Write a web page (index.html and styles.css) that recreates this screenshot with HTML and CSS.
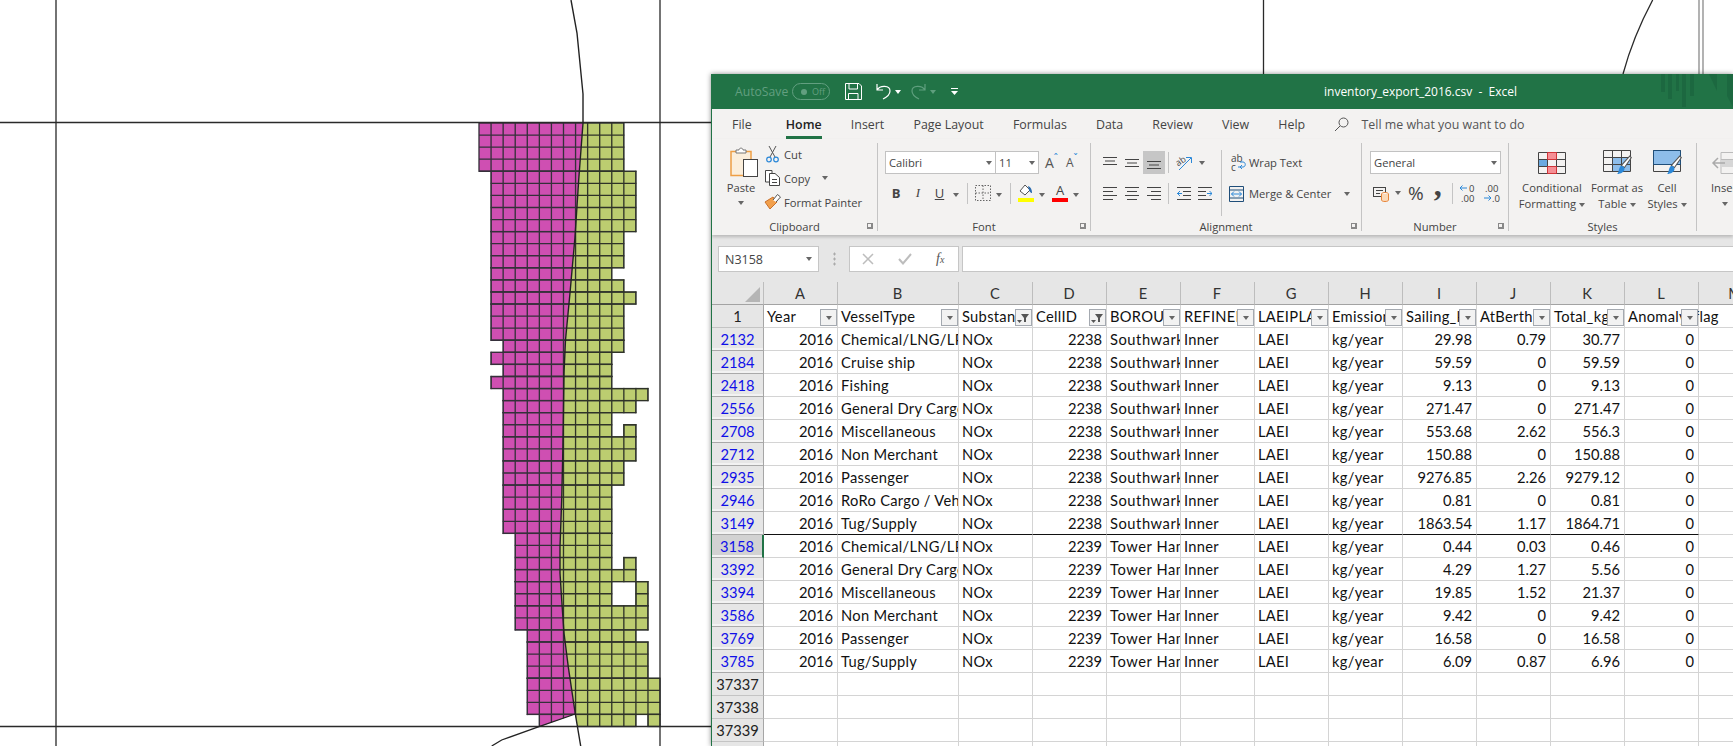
FILE: index.html
```html
<!DOCTYPE html>
<html lang="en">
<head>
  <meta charset="UTF-8" />
  <title>inventory_export_2016.csv - Excel</title>
  <link rel="stylesheet" href="styles.css">
</head>
<body>

  <!-- Icon sprite -->
  <svg class="sprite" width="0" height="0">
    <symbol id="i-top" viewBox="0 0 14 14"><path d="M0 1.5H14M2 5H12M0 8.5H14" stroke="#444" fill="none"/></symbol>
    <symbol id="i-mid" viewBox="0 0 14 14"><path d="M0 3.5H14M2 7H12M0 10.5H14" stroke="#444" fill="none"/></symbol>
    <symbol id="i-bot" viewBox="0 0 14 14"><path d="M0 5.5H14M2 9H12M0 12.5H14" stroke="#444" fill="none"/></symbol>
    <symbol id="i-left" viewBox="0 0 14 14"><path d="M0 1.5H14M0 5.5H10M0 9.5H14M0 13.5H10" stroke="#444" fill="none"/></symbol>
    <symbol id="i-center" viewBox="0 0 14 14"><path d="M0 1.5H14M2 5.5H12M0 9.5H14M2 13.5H12" stroke="#444" fill="none"/></symbol>
    <symbol id="i-right" viewBox="0 0 14 14"><path d="M0 1.5H14M4 5.5H14M0 9.5H14M4 13.5H14" stroke="#444" fill="none"/></symbol>
    <symbol id="i-brush" viewBox="0 0 14 20"><path d="M12 1l1.5 1.5L7 12l-3-2z" fill="#fff" stroke="#555"/><path d="M3.5 10.5c2-.5 3.500 1 3.500 2.500 0 3-3.500 5-7 5 2-1.500 1-5 3.500-7.500z" fill="#2b88d8"/></symbol>
    <symbol id="i-funnel" viewBox="0 0 15 15"><path d="M5 4h8L10 8v4H8V8z" fill="#555"/><path d="M1 10h5l-2.500 3z" fill="#555"/></symbol>
  </svg>

  <!-- Map behind the window -->
  <svg class="map" width="1733" height="746" viewBox="0 0 1733 746">
    <defs>
      <clipPath id="pinkSide">
        <polygon points="0,100 583,100 583,123 578.700,180 575,237 570,293 565.500,340 564,373 563.300,423 562.700,457 561.700,500 560,547 560,573 561.700,600 564,633 568.300,667 575.300,714 539,727 0,727"/>
      </clipPath>
      <clipPath id="greenSide">
        <polygon points="583,100 583,123 578.700,180 575,237 570,293 565.500,340 564,373 563.300,423 562.700,457 561.700,500 560,547 560,573 561.700,600 564,633 568.300,667 575.300,714 580.700,746 800,746 800,100"/>
      </clipPath>
      <g id="cells" transform="translate(479 123) scale(12.07)" stroke-width=".11">
        <rect x="0" y="0" width="12" height="4"/>
        <rect x="1" y="4" width="12" height="5"/>
        <rect x="1" y="9" width="11" height="3"/>
        <rect x="1" y="12" width="10" height="1"/>
        <rect x="1" y="13" width="11" height="1"/>
        <rect x="1" y="14" width="12" height="1"/>
        <rect x="1" y="15" width="11" height="3"/>
        <rect x="2" y="18" width="10" height="1"/>
        <rect x="1" y="19" width="10" height="1"/>
        <rect x="2" y="20" width="9" height="1"/>
        <rect x="1" y="21" width="10" height="1"/>
        <rect x="2" y="22" width="12" height="1"/>
        <rect x="2" y="23" width="11" height="1"/>
        <rect x="2" y="24" width="9" height="2"/>
        <rect x="12" y="25" width="1" height="1"/>
        <rect x="2" y="26" width="11" height="2"/>
        <rect x="2" y="28" width="10" height="2"/>
        <rect x="2" y="30" width="9" height="4"/>
        <rect x="3" y="34" width="8" height="3"/>
        <rect x="12" y="36" width="1" height="1"/>
        <rect x="3" y="37" width="10" height="1"/>
        <rect x="3" y="38" width="8" height="2"/>
        <rect x="13" y="38" width="1" height="2"/>
        <rect x="3" y="40" width="11" height="2"/>
        <rect x="4" y="42" width="9" height="1"/>
        <rect x="4" y="43" width="10" height="3"/>
        <rect x="4" y="46" width="11" height="3"/>
        <rect x="5" y="49" width="8" height="1"/>
        <rect x="14" y="49" width="1" height="1"/>
      </g>
      <mask id="cellMask" maskUnits="userSpaceOnUse" x="0" y="0" width="800" height="746">
        <use href="#cells" fill="#fff" stroke="#fff"/>
      </mask>
    </defs>

    <g clip-path="url(#pinkSide)"><use href="#cells" fill="#cf4fb2" stroke="#35303a"/></g>
    <g clip-path="url(#greenSide)"><use href="#cells" fill="#bccd70" stroke="#35383a"/></g>

    <!-- cell lines, same grid over both colours -->
    <g clip-path="url(#pinkSide)"><g mask="url(#cellMask)">
      <path transform="translate(479 123) scale(12.07)" stroke="#35303a" stroke-width=".11" fill="none" d="M1 0V50M2 0V50M3 0V50M4 0V50M5 0V50M6 0V50M7 0V50M8 0V50M9 0V50M0 1H10M0 2H10M0 3H10M0 4H10M0 5H10M0 6H10M0 7H10M0 8H10M0 9H10M0 10H10M0 11H10M0 12H10M0 13H10M0 14H10M0 15H10M0 16H10M0 17H10M0 18H10M0 19H10M0 20H10M0 21H10M0 22H10M0 23H10M0 24H10M0 25H10M0 26H10M0 27H10M0 28H10M0 29H10M0 30H10M0 31H10M0 32H10M0 33H10M0 34H10M0 35H10M0 36H10M0 37H10M0 38H10M0 39H10M0 40H10M0 41H10M0 42H10M0 43H10M0 44H10M0 45H10M0 46H10M0 47H10M0 48H10M0 49H10"/>
    </g></g>
    <g clip-path="url(#greenSide)"><g mask="url(#cellMask)">
      <path transform="translate(479 123) scale(12.07)" stroke="#2f3328" stroke-width=".11" fill="none" d="M6 0V50M7 0V50M8 0V50M9 0V50M10 0V50M11 0V50M12 0V50M13 0V50M14 0V50M5 1H15M5 2H15M5 3H15M5 4H15M5 5H15M5 6H15M5 7H15M5 8H15M5 9H15M5 10H15M5 11H15M5 12H15M5 13H15M5 14H15M5 15H15M5 16H15M5 17H15M5 18H15M5 19H15M5 20H15M5 21H15M5 22H15M5 23H15M5 24H15M5 25H15M5 26H15M5 27H15M5 28H15M5 29H15M5 30H15M5 31H15M5 32H15M5 33H15M5 34H15M5 35H15M5 36H15M5 37H15M5 38H15M5 39H15M5 40H15M5 41H15M5 42H15M5 43H15M5 44H15M5 45H15M5 46H15M5 47H15M5 48H15M5 49H15"/>
    </g></g>

    <!-- frame lines -->
    <g fill="none" stroke="#2a2a2a">
      <path d="M0 122.500H711M0 726.500H711" stroke-width="1.300"/>
      <path d="M56 0V746M660 0V746M1263.500 0V74" stroke-width="1.300"/>
      <path d="M1699 0V74M1703 0V74" stroke="#8a8a8a" stroke-width="1.300"/>
      <path d="M1652.700 0C1641 22 1630 48 1623 74" stroke-width="1.300"/>
      <path d="M571 0L577 33 583 94 583 123 578.700 180 575 237 570 293 565.500 340 564 373 563.300 423 562.700 457 561.700 500 560 547 560 573 561.700 600 564 633 568.300 667 575.300 714 580.700 746" stroke="#222" stroke-width="1.400"/>
      <path d="M575.300 714L539 726.700 501.700 740 491.700 746" stroke="#222" stroke-width="1.300"/>
    </g>
  </svg>

  <!-- Excel window -->
  <div class="excel">

    <!-- Title bar -->
    <header class="titlebar">
      <span class="autosave">AutoSave</span>
      <span class="toggle"><i></i>Off</span>
      <svg class="qa-save" width="17" height="17" viewBox="0 0 17 17" fill="none" stroke="#fff"><path d="M.5.5H14L16.500 3V16.500H.5Z"/><path d="M4 .5V6H12.500V.5M3.500 16.500V10.500H13V16.500"/></svg>
      <svg class="qa-undo" width="15" height="17" viewBox="0 0 15 17" fill="none" stroke="#fff" stroke-width="1.200"><path d="M1 1V7H7M1 7C4 2 14 2 14 8C14 11 11 14 7 16"/></svg>
      <span class="caret white"></span>
      <svg class="qa-redo" width="15" height="17" viewBox="0 0 15 17" fill="none" stroke="#5f9f7e" stroke-width="1.200"><path d="M14 1V7H8M14 7C11 2 1 2 1 8C1 11 4 14 8 16"/></svg>
      <span class="caret muted"></span>
      <svg class="qa-more" width="7" height="8" viewBox="0 0 7 8"><path d="M0 .5H7" stroke="#fff"/><path d="M0 3H7L3.500 7Z" fill="#fff"/></svg>
      <span class="doc-title">inventory_export_2016.csv&nbsp; -&nbsp; Excel</span>
      <svg class="watermark" width="72" height="35" viewBox="0 0 72 35" fill="#1c6840"><rect x="0" width="4" height="18"/><rect x="7" width="4" height="25"/><rect x="15" width="3" height="17"/><rect x="21" width="4" height="33"/><rect x="29" width="4" height="22"/><path d="M48 0H56V17Z"/><path d="M66 0H72V33L66 22Z"/></svg>
    </header>

    <!-- Tabs -->
    <nav class="tabs">
      <a class="file">File</a>
      <a class="active">Home</a>
      <a>Insert</a>
      <a>Page Layout</a>
      <a>Formulas</a>
      <a>Data</a>
      <a>Review</a>
      <a>View</a>
      <a>Help</a>
      <svg class="tell-icon" width="15" height="15" viewBox="0 0 15 15" fill="none" stroke="#555"><circle cx="9.500" cy="5.500" r="4.500"/><path d="M6 9L1 14"/></svg>
      <span class="tell">Tell me what you want to do</span>
    </nav>

    <!-- Ribbon -->
    <section class="ribbon">

      <!-- Clipboard -->
      <div class="group clipboard">
        <div class="group-body">
          <div class="paste">
            <svg width="28" height="30" viewBox="0 0 28 30"><rect x="1" y="4.500" width="20" height="24" fill="#fbeedb" stroke="#ee9f45" stroke-width="1.500"/><path d="M6 6V3H9C9 .5 13 .5 13 3H16V6Z" fill="#fff" stroke="#777"/><rect x="13.500" y="12.500" width="14" height="17" fill="#fff" stroke="#444"/></svg>
            <span>Paste</span>
            <span class="caret"></span>
          </div>
          <div class="clip-actions">
            <div class="clip-row">
              <svg width="18" height="18" viewBox="0 0 18 18" fill="none"><path d="M5 1L11 12M12 1L6 12" stroke="#555"/><circle cx="5" cy="14.500" r="2.300" stroke="#2b88d8" stroke-width="1.200"/><circle cx="12" cy="14.500" r="2.300" stroke="#2b88d8" stroke-width="1.200"/></svg>
              <span>Cut</span>
            </div>
            <div class="clip-row">
              <svg width="18" height="18" viewBox="0 0 18 18" fill="#fff" stroke="#444"><path d="M1.500 1.500H8V13H1.500Z"/><path d="M5.500 4.500H11L15.500 8.500V16.500H5.500Z"/><path d="M8 10.500H13M8 13.500H13" fill="none"/></svg>
              <span>Copy</span>
              <span class="caret copy-caret"></span>
            </div>
            <div class="clip-row">
              <svg width="18" height="18" viewBox="0 0 18 18"><path d="M1 9L9 4L13 9L6 16Z" fill="#f2a04c" stroke="#c9702a"/><path d="M9 7L13.500 1.500L16.500 4L12 9" fill="#fff" stroke="#555"/></svg>
              <span>Format Painter</span>
            </div>
          </div>
        </div>
        <div class="group-label">Clipboard</div>
        <span class="launcher"></span>
      </div>

      <!-- Font -->
      <div class="group font">
        <div class="group-body column">
          <div class="font-row1">
            <span class="combo font-name">Calibri<span class="caret"></span></span>
            <span class="combo font-size">11<span class="caret"></span></span>
            <span class="grow-font">A<sup>ˆ</sup></span>
            <span class="shrink-font">A<sup>ˇ</sup></span>
          </div>
          <div class="font-row2">
            <b class="t22 fmt">B</b>
            <i class="t22 fmt serif">I</i>
            <u class="t21 fmt">U</u>
            <span class="t11"><span class="caret"></span></span>
            <span class="vsep s-b"></span>
            <svg class="borders" width="16" height="16" viewBox="0 0 16 16" fill="none" stroke="#666" stroke-dasharray="1.500 1.500"><path d="M.5.5H15.500V15.500H.5ZM8 .5V15.500M.5 8H15.500"/></svg>
            <span class="t16"><span class="caret"></span></span>
            <span class="vsep s-f"></span>
            <span class="fill-tool">
              <svg width="16" height="12" viewBox="0 0 16 12"><path d="M2 7L7 1L12 6L7 11Z" fill="#fff" stroke="#555"/><path d="M10 2c3 1 4 4 4 7-2 0-3-2-4-7z" fill="#2b6cb0"/></svg>
              <span class="bar yellow"></span>
            </span>
            <span class="t16"><span class="caret"></span></span>
            <span class="color-tool">A<span class="bar red"></span></span>
            <span class="t16 last"><span class="caret"></span></span>
          </div>
        </div>
        <div class="group-label">Font</div>
        <span class="launcher"></span>
      </div>

      <!-- Alignment -->
      <div class="group alignment">
        <div class="group-body">
          <div class="align-left column">
            <div class="align-row first">
              <svg width="14" height="14"><use href="#i-top"/></svg>
              <svg width="14" height="14"><use href="#i-mid"/></svg>
              <span class="pressed"><svg width="14" height="14"><use href="#i-bot"/></svg></span>
              <span class="vsep tall"></span>
              <svg class="orient" width="17" height="18" viewBox="0 0 17 18" fill="none"><text x="0" y="10" class="orient-text" transform="rotate(-35 5 8)">ab</text><path d="M3 16L15 4M10 3.500H15.500V9" stroke="#2b88d8"/></svg>
              <span class="caret"></span>
            </div>
            <div class="align-row second">
              <svg width="14" height="14"><use href="#i-left"/></svg>
              <svg width="14" height="14"><use href="#i-center"/></svg>
              <svg width="14" height="14"><use href="#i-right"/></svg>
              <span class="vsep tall"></span>
              <svg class="outdent" width="14" height="14" viewBox="0 0 14 14" fill="none"><path d="M0 1.500H14M6 5.500H14M6 9.500H14M0 13.500H14" stroke="#444"/><path d="M5 7.500H0M3 5L.5 7.500L3 10" stroke="#2b88d8"/></svg>
              <svg class="indent" width="14" height="14" viewBox="0 0 14 14" fill="none"><path d="M0 1.500H14M0 5.500H8M0 9.500H8M0 13.500H14" stroke="#444"/><path d="M9 7.500H14M11.500 5L14 7.500L11.500 10" stroke="#2b88d8"/></svg>
            </div>
          </div>
          <div class="align-right column">
            <div class="wrap-row">
              <svg width="15" height="18" viewBox="0 0 15 18" fill="none"><text x="0" y="8" class="wrap-text">ab</text><text x="0" y="17" class="wrap-text">c</text><path d="M7 13H12C15 13 15 8 12 8H9M9 13L11 11M9 13L11 15" stroke="#2b88d8"/></svg>
              <span>Wrap Text</span>
            </div>
            <div class="merge-row">
              <svg width="15" height="16" viewBox="0 0 15 16" fill="none"><path d="M.5.5H14.500V15.500H.5ZM.5 4H14.500M.5 12H14.500" stroke="#1f4e79"/><path d="M2.500 8H12.500M5 5.500L2.500 8L5 10.500M10 5.500L12.500 8L10 10.500" stroke="#2b88d8"/></svg>
              <span>Merge &amp; Center</span>
              <span class="caret merge-caret"></span>
            </div>
          </div>
        </div>
        <div class="group-label">Alignment</div>
        <span class="launcher"></span>
      </div>

      <!-- Number -->
      <div class="group number">
        <div class="group-body column">
          <span class="combo num-format">General<span class="caret"></span></span>
          <div class="num-row">
            <svg class="acct" width="17" height="17" viewBox="0 0 17 17" fill="none"><rect x=".5" y="2.500" width="12" height="9" stroke="#444"/><path d="M3 5.500H10M3 8.500H7" stroke="#444"/><ellipse cx="12" cy="9" rx="3.500" ry="1.500" fill="#fff" stroke="#e8853a"/><path d="M8.500 9V15C8.500 17 15.500 17 15.500 15V9" fill="#fbd9b8" stroke="#e8853a"/></svg>
            <span class="caret acct-caret"></span>
            <span class="pct">%</span>
            <span class="comma">,</span>
            <span class="vsep tall n-sep"></span>
            <svg class="dec" width="18" height="20" viewBox="0 0 18 20" fill="none"><path d="M1 5H8M3.500 2.500L1 5L3.500 7.500" stroke="#2b88d8"/><text x="10" y="9" class="dec-text">0</text><text x="2" y="19" class="dec-text">.00</text></svg>
            <svg class="dec two" width="18" height="20" viewBox="0 0 18 20" fill="none"><text x="2" y="9" class="dec-text">.00</text><path d="M1 15H8M5.500 12.500L8 15L5.500 17.500" stroke="#2b88d8"/><text x="9" y="19" class="dec-text">.0</text></svg>
          </div>
        </div>
        <div class="group-label">Number</div>
        <span class="launcher"></span>
      </div>

      <!-- Styles -->
      <div class="group styles">
        <div class="group-body">
          <div class="style-tool cond">
            <svg width="28" height="22" viewBox="0 0 28 22" fill="none"><rect x="9.500" y=".5" width="9" height="7" fill="#f58f95"/><rect x=".5" y="7.500" width="9" height="7" fill="#6aa9e0"/><rect x="9.500" y="14.500" width="9" height="7" fill="#f58f95"/><path d="M.5.5H27.500V21.500H.5ZM.5 7.500H27.500M.5 14.500H27.500M9.500.5V21.500M18.500.5V21.500" stroke="#444"/><path d="M9.500.5H18.500V7.500H9.500ZM9.500 14.500H18.500V21.500H9.500Z" stroke="#d13438"/></svg>
            <span>Conditional</span>
            <span>Formatting<span class="caret"></span></span>
          </div>
          <div class="style-tool as-table">
            <svg width="30" height="26" viewBox="0 0 30 26" fill="none"><rect x="10" y="8" width="18" height="13" fill="#8dbdea"/><path d="M.5.5H27.500V21.500H.5ZM.5 7.500H27.500M.5 14.500H27.500M9.500.5V21.500M18.500.5V21.500" stroke="#444"/><svg x="14" y="5" width="15" height="21"><use href="#i-brush"/></svg></svg>
            <span>Format as</span>
            <span>Table<span class="caret"></span></span>
          </div>
          <div class="style-tool cell-styles">
            <svg width="30" height="26" viewBox="0 0 30 26" fill="none"><rect x="1" y="1" width="26" height="13" fill="#8dbdea"/><path d="M.5.5H27.500V21.500H.5ZM.5 14.500H27.500" stroke="#444"/><path d="M.5.5H27.500V14.500H.5Z" stroke="#1f4e79"/><svg x="14" y="5" width="15" height="21"><use href="#i-brush"/></svg></svg>
            <span>Cell</span>
            <span>Styles<span class="caret"></span></span>
          </div>
        </div>
        <div class="group-label">Styles</div>
      </div>

      <!-- Cells (cut off at the screen edge) -->
      <div class="group cells-group">
        <div class="group-body">
          <div class="insert-tool">
            <svg width="24" height="22" viewBox="0 0 24 22" fill="none"><path d="M10 .5H24M10 7.500H24M10 14.500H24M10 21.500H24M10 .5V21.500" stroke="#bbb"/><rect x="9" y="8" width="15" height="7" fill="#d6d6d6"/><path d="M14 11H2M7 6L2 11L7 16" stroke="#aaa" stroke-width="1.500"/></svg>
            <span>Insert</span>
            <span class="caret"></span>
          </div>
        </div>
      </div>
    </section>

    <!-- Formula bar -->
    <div class="formula">
      <span class="name-box">N3158<span class="caret"></span></span>
      <span class="dots"></span>
      <span class="fx-box">
        <svg width="12" height="12" viewBox="0 0 12 12"><path d="M1 1L11 11M11 1L1 11" stroke="#bdbdbd" stroke-width="1.500"/></svg>
        <svg width="14" height="12" viewBox="0 0 14 12" fill="none"><path d="M1 6L5 10.500L13 1" stroke="#bdbdbd" stroke-width="2"/></svg>
        <i class="fx">f<small>x</small></i>
      </span>
      <span class="formula-input"></span>
    </div>

    <!-- Sheet -->
    <table class="sheet">
      <colgroup>
        <col class="c-head"><col class="c-std"><col class="c-wide"><col class="c-std"><col class="c-std"><col class="c-std"><col class="c-std"><col class="c-std"><col class="c-std"><col class="c-std"><col class="c-std"><col class="c-std"><col class="c-std"><col class="c-std">
      </colgroup>
      <thead>
        <tr class="letters">
          <th class="corner"><span class="corner-mark"></span></th>
          <th>A</th><th>B</th><th>C</th><th>D</th><th>E</th><th>F</th><th>G</th><th>H</th><th>I</th><th>J</th><th>K</th><th>L</th><th>M</th>
        </tr>
      </thead>
      <tbody>
        <tr class="fields">
          <th class="rh plain">1</th>
          <td>Year<span class="fb"><span class="caret"></span></span></td>
          <td>VesselType<span class="fb"><span class="caret"></span></span></td>
          <td>Substance<span class="fb"><svg width="15" height="15"><use href="#i-funnel"/></svg></span></td>
          <td>CellID<span class="fb"><svg width="15" height="15"><use href="#i-funnel"/></svg></span></td>
          <td>BOROUGH<span class="fb"><span class="caret"></span></span></td>
          <td>REFINED<span class="fb"><span class="caret"></span></span></td>
          <td>LAEIPLANT<span class="fb"><span class="caret"></span></span></td>
          <td>Emissions<span class="fb"><span class="caret"></span></span></td>
          <td>Sailing_kg<span class="fb"><span class="caret"></span></span></td>
          <td>AtBerth_kg<span class="fb"><span class="caret"></span></span></td>
          <td>Total_kg<span class="fb"><span class="caret"></span></span></td>
          <td class="spill">Anomaly_flag<span class="fb"><span class="caret"></span></span></td>
          <td class="empty"></td>
        </tr>
        <tr><th class="rh">2132</th><td>2016</td><td>Chemical/LNG/LPG</td><td>NOx</td><td>2238</td><td>Southwark</td><td>Inner</td><td>LAEI</td><td>kg/year</td><td>29.98</td><td>0.79</td><td>30.77</td><td>0</td><td></td></tr>
        <tr><th class="rh">2184</th><td>2016</td><td>Cruise ship</td><td>NOx</td><td>2238</td><td>Southwark</td><td>Inner</td><td>LAEI</td><td>kg/year</td><td>59.59</td><td>0</td><td>59.59</td><td>0</td><td></td></tr>
        <tr><th class="rh">2418</th><td>2016</td><td>Fishing</td><td>NOx</td><td>2238</td><td>Southwark</td><td>Inner</td><td>LAEI</td><td>kg/year</td><td>9.13</td><td>0</td><td>9.13</td><td>0</td><td></td></tr>
        <tr><th class="rh">2556</th><td>2016</td><td>General Dry Cargo</td><td>NOx</td><td>2238</td><td>Southwark</td><td>Inner</td><td>LAEI</td><td>kg/year</td><td>271.47</td><td>0</td><td>271.47</td><td>0</td><td></td></tr>
        <tr><th class="rh">2708</th><td>2016</td><td>Miscellaneous</td><td>NOx</td><td>2238</td><td>Southwark</td><td>Inner</td><td>LAEI</td><td>kg/year</td><td>553.68</td><td>2.62</td><td>556.3</td><td>0</td><td></td></tr>
        <tr><th class="rh">2712</th><td>2016</td><td>Non Merchant</td><td>NOx</td><td>2238</td><td>Southwark</td><td>Inner</td><td>LAEI</td><td>kg/year</td><td>150.88</td><td>0</td><td>150.88</td><td>0</td><td></td></tr>
        <tr><th class="rh">2935</th><td>2016</td><td>Passenger</td><td>NOx</td><td>2238</td><td>Southwark</td><td>Inner</td><td>LAEI</td><td>kg/year</td><td>9276.85</td><td>2.26</td><td>9279.12</td><td>0</td><td></td></tr>
        <tr><th class="rh">2946</th><td>2016</td><td>RoRo Cargo / Vehicle</td><td>NOx</td><td>2238</td><td>Southwark</td><td>Inner</td><td>LAEI</td><td>kg/year</td><td>0.81</td><td>0</td><td>0.81</td><td>0</td><td></td></tr>
        <tr class="split"><th class="rh">3149</th><td>2016</td><td>Tug/Supply</td><td>NOx</td><td>2238</td><td>Southwark</td><td>Inner</td><td>LAEI</td><td>kg/year</td><td>1863.54</td><td>1.17</td><td>1864.71</td><td>0</td><td></td></tr>
        <tr><th class="rh active">3158</th><td>2016</td><td>Chemical/LNG/LPG</td><td>NOx</td><td>2239</td><td>Tower Hamlets</td><td>Inner</td><td>LAEI</td><td>kg/year</td><td>0.44</td><td>0.03</td><td>0.46</td><td>0</td><td></td></tr>
        <tr><th class="rh">3392</th><td>2016</td><td>General Dry Cargo</td><td>NOx</td><td>2239</td><td>Tower Hamlets</td><td>Inner</td><td>LAEI</td><td>kg/year</td><td>4.29</td><td>1.27</td><td>5.56</td><td>0</td><td></td></tr>
        <tr><th class="rh">3394</th><td>2016</td><td>Miscellaneous</td><td>NOx</td><td>2239</td><td>Tower Hamlets</td><td>Inner</td><td>LAEI</td><td>kg/year</td><td>19.85</td><td>1.52</td><td>21.37</td><td>0</td><td></td></tr>
        <tr><th class="rh">3586</th><td>2016</td><td>Non Merchant</td><td>NOx</td><td>2239</td><td>Tower Hamlets</td><td>Inner</td><td>LAEI</td><td>kg/year</td><td>9.42</td><td>0</td><td>9.42</td><td>0</td><td></td></tr>
        <tr><th class="rh">3769</th><td>2016</td><td>Passenger</td><td>NOx</td><td>2239</td><td>Tower Hamlets</td><td>Inner</td><td>LAEI</td><td>kg/year</td><td>16.58</td><td>0</td><td>16.58</td><td>0</td><td></td></tr>
        <tr><th class="rh">3785</th><td>2016</td><td>Tug/Supply</td><td>NOx</td><td>2239</td><td>Tower Hamlets</td><td>Inner</td><td>LAEI</td><td>kg/year</td><td>6.09</td><td>0.87</td><td>6.96</td><td>0</td><td></td></tr>
        <tr><th class="rh plain">37337</th><td></td><td></td><td></td><td></td><td></td><td></td><td></td><td></td><td></td><td></td><td></td><td></td><td></td></tr>
        <tr><th class="rh plain">37338</th><td></td><td></td><td></td><td></td><td></td><td></td><td></td><td></td><td></td><td></td><td></td><td></td><td></td></tr>
        <tr><th class="rh plain">37339</th><td></td><td></td><td></td><td></td><td></td><td></td><td></td><td></td><td></td><td></td><td></td><td></td><td></td></tr>
        <tr><th class="rh plain"></th><td></td><td></td><td></td><td></td><td></td><td></td><td></td><td></td><td></td><td></td><td></td><td></td><td></td></tr>
      </tbody>
    </table>
  </div>

</body>
</html>
```

FILE: styles.css
```css
html, body {
  margin: 0;
  padding: 0;
  background-color: #fff;
}

body {
  position: relative;
  width: 1733px;
  height: 746px;
  overflow: hidden;
  font-family: "Open Sans", "Liberation Sans", sans-serif;
}

.sprite {
  position: absolute;
}

/* Map */
.map {
  position: absolute;
  left: 0;
  top: 0;
}

/* Window */
.excel {
  position: absolute;
  left: 711px;
  top: 74px;
  width: 1022px;
  height: 672px;
  display: flex;
  flex-direction: column;
  overflow: hidden;
  box-sizing: border-box;
  border-left: 1px solid #217346;
  background-color: #e6e6e6;
  box-shadow: 0 0 5px rgba(0,0,0,0.45);
}

.caret {
  display: inline-block;
  width: 0;
  height: 0;
  border-left: 3.5px solid transparent;
  border-right: 3.5px solid transparent;
  border-top: 4px solid #666;
}

.caret.white {
  border-top-color: #fff;
  margin-left: 4px;
}

.caret.muted {
  border-top-color: #5f9f7e;
  margin-left: 4px;
}

/* Title bar */
.titlebar {
  position: relative;
  flex: none;
  height: 35px;
  display: flex;
  align-items: center;
  padding-left: 23px;
  background-color: #217346;
  color: #fff;
  font-size: 12px;
}

.autosave {
  width: 57px;
  color: #629f80;
  font-size: 12.2px;
}

.toggle {
  box-sizing: border-box;
  width: 38px;
  height: 17px;
  display: flex;
  align-items: center;
  gap: 5px;
  padding-left: 8px;
  border: 1px solid #629f80;
  border-radius: 9px;
  color: #629f80;
  font-size: 9px;
}

.toggle i {
  width: 6px;
  height: 6px;
  border-radius: 50%;
  background-color: #629f80;
}

.qa-save { margin-left: 15px; }
.qa-undo { margin-left: 14px; }
.qa-redo { margin-left: 10px; }
.qa-more { margin-left: 15px; }

.doc-title {
  margin-left: 366px;
  font-size: 12px;
  white-space: nowrap;
}

.watermark {
  position: absolute;
  left: 949px;
  top: 0;
}

/* Tabs */
.tabs {
  flex: none;
  height: 30px;
  display: flex;
  align-items: center;
  gap: 29.2px;
  padding-left: 20px;
  background-color: #f3f2f1;
  color: #444;
  font-size: 12.4px;
}

.tabs a {
  position: relative;
  white-space: nowrap;
}

.tabs a.file {
  margin-right: 5px;
}

.tabs a.active {
  color: #222;
  font-weight: 600;
}

.tabs a.active::after {
  content: "";
  position: absolute;
  left: 0;
  right: 0;
  bottom: -6px;
  height: 3px;
  background-color: #217346;
}

.tell-icon { margin-left: 0; }

.tell {
  margin-left: -17px;
  color: #555;
  white-space: nowrap;
}

/* Ribbon */
.ribbon {
  position: relative;
  z-index: 1;
  flex: none;
  height: 96px;
  display: flex;
  box-sizing: border-box;
  padding: 4px 0;
  background-color: #f3f2f1;
  color: #444;
  font-size: 11.2px;
  box-shadow: 0 2px 3px rgba(0,0,0,0.2);
}

.group {
  position: relative;
  flex: none;
  display: flex;
  flex-direction: column;
  box-sizing: border-box;
  border-right: 1px solid #c4c4c4;
}

.group-body {
  flex: 1;
  display: flex;
  min-height: 0;
}

.column {
  flex-direction: column;
  display: flex;
}

.group-label {
  flex: none;
  height: 16px;
  margin-bottom: -4px;
  line-height: 16px;
  text-align: center;
  white-space: nowrap;
}

.launcher {
  position: absolute;
  right: 4px;
  bottom: 2px;
  width: 6px;
  height: 6px;
  border-left: 1px solid #888;
  border-top: 1px solid #888;
  border-right: 2px solid #888;
  border-bottom: 2px solid #888;
  box-sizing: border-box;
}

.clipboard { width: 166px; }
.font { width: 213px; }
.alignment { width: 271px; }
.number { width: 147px; }
.styles { width: 188px; }
.cells-group { border-right: none; width: 36px; }

.vsep {
  width: 1px;
  height: 21px;
  background-color: #c4c4c4;
}

/* Clipboard */
.paste {
  width: 44px;
  margin-left: 7px;
  padding-top: 4px;
  display: flex;
  flex-direction: column;
  align-items: center;
}

.paste svg { margin-left: 5px; }
.paste span:nth-of-type(1) { margin-top: 3px; line-height: 16px; }
.paste .caret { margin-top: 5px; }

.clip-actions {
  margin-left: 1px;
  margin-top: -1px;
}

.clip-row {
  height: 24px;
  display: flex;
  align-items: center;
  gap: 2px;
  white-space: nowrap;
}

.copy-caret { margin-left: 10px; }

/* Font */
.font-row1 {
  display: flex;
  align-items: center;
  margin: 8px 0 7px 7px;
}

.combo {
  box-sizing: border-box;
  height: 23px;
  display: flex;
  align-items: center;
  justify-content: space-between;
  padding: 0 3px;
  border: 1px solid #c2c2c2;
  background-color: #fff;
  color: #444;
  font-size: 11.2px;
}

.font-name { width: 111px; }
.font-size { width: 44px; margin-left: -1px; }

.grow-font, .shrink-font {
  font-size: 14px;
  color: #555;
}

.grow-font { margin-left: 6px; width: 21px; }
.shrink-font { font-size: 12px; }

.font-row1 sup {
  font-size: 10px;
  line-height: 0;
  color: #2b88d8;
}

.font-row2 {
  height: 24px;
  display: flex;
  align-items: center;
  margin-left: 7px;
}

.fmt {
  font-size: 13px;
  text-align: center;
  color: #444;
}

.serif { font-family: "Liberation Serif", serif; }

.t22 { width: 22px; }
.t21 { width: 21px; }
.t11 { width: 11px; text-align: center; }
.t16 { width: 16px; text-align: center; }
.t11 .caret, .t16 .caret { vertical-align: middle; }
.s-b { margin-left: 6px; }
.borders { margin-left: 7px; }
.s-f { margin-left: 3px; }

.fill-tool {
  margin-left: 7px;
  width: 16px;
  display: flex;
  flex-direction: column;
  gap: 2px;
}

.bar {
  display: block;
  height: 4px;
}

.yellow { background-color: #ffff00; }
.red { background-color: #ff0000; }

.color-tool {
  width: 16px;
  margin-left: 2px;
  font-size: 13px;
  line-height: 13px;
  text-align: center;
  color: #444;
}

.color-tool .bar { margin-top: 1px; }

/* Alignment */
.align-left {
  width: 119px;
  margin-left: 12px;
  flex: none;
  box-sizing: border-box;
  height: 66px;
  margin-top: 7px;
  border-right: 1px solid #c4c4c4;
}

.align-row {
  display: flex;
  align-items: center;
  gap: 8px;
}

.align-row.first { height: 23px; margin-top: 1px; }
.align-row.second { height: 24px; margin-top: 7px; }

.pressed {
  width: 22px;
  height: 23px;
  margin-left: -4px;
  display: flex;
  align-items: center;
  justify-content: center;
  background-color: #c6c6c6;
}

.first .vsep { margin-left: -5px; }
.orient { margin-left: -1px; }
.orient-text { font-size: 9px; fill: #444; }
.first .caret { margin-left: -2px; }
.second .vsep { margin-left: -1px; }
.outdent { margin-left: 0; }
.indent { margin-left: -1px; }

.align-right {
  padding-left: 7px;
  margin-top: 8px;
}

.wrap-row, .merge-row {
  height: 23px;
  display: flex;
  align-items: center;
  white-space: nowrap;
}

.wrap-row { margin-left: 2px; gap: 3px; }
.wrap-text { font-size: 10px; fill: #444; }
.merge-row { margin-top: 8px; gap: 5px; }
.merge-caret { margin-left: 8px; }

/* Number */
.num-format {
  width: 131px;
  margin: 8px 0 7px 8px;
  flex: none;
}

.num-row {
  height: 24px;
  display: flex;
  align-items: center;
  margin-left: 11px;
}

.acct-caret { margin-left: 5px; }

.pct {
  margin-left: 7px;
  font-size: 19px;
  color: #444;
}

.comma {
  width: 8px;
  margin-left: 10px;
  margin-top: -16px;
  font-family: "Liberation Serif", serif;
  font-size: 32px;
  font-weight: 700;
  line-height: 20px;
  color: #444;
}

.n-sep { margin-left: 10px; }
.dec { margin-left: 6px; }
.dec.two { margin-left: 6px; }
.dec-text { font-size: 9.5px; fill: #444; }

/* Styles */
.styles .group-body {
  gap: 4px;
  padding-left: 9px;
}

.style-tool {
  flex: none;
  display: flex;
  flex-direction: column;
  align-items: center;
  padding-top: 7px;
  line-height: 16px;
  white-space: nowrap;
}

.style-tool svg {
  height: 26px;
  margin-bottom: 4px;
}

.style-tool .caret {
  margin-left: 3px;
  vertical-align: middle;
}

.cond { width: 68px; }
.as-table { width: 54px; }
.cell-styles { width: 38px; }
.as-table svg, .cell-styles svg { margin-left: 2px; }
.style-tool svg svg { margin: 0; height: 21px; }

.insert-tool {
  padding: 7px 0 0 14px;
  line-height: 16px;
  display: flex;
  flex-direction: column;
}

.insert-tool svg { height: 26px; margin-bottom: 4px; }
.insert-tool .caret { margin: 6px 0 0 11px; }

/* Formula bar */
.formula {
  flex: none;
  height: 47px;
  display: flex;
  box-sizing: border-box;
  padding: 11px 0 10px 6px;
  background-color: #e6e6e6;
}

.name-box, .fx-box, .formula-input {
  box-sizing: border-box;
  height: 26px;
  border: 1px solid #c6c6c6;
  background-color: #fff;
}

.name-box {
  width: 101px;
  display: flex;
  align-items: center;
  justify-content: space-between;
  padding: 0 6px;
  color: #444;
  font-size: 12.5px;
}

.dots {
  width: 30px;
  position: relative;
  background: radial-gradient(circle, #aaa 1px, transparent 1.2px) center / 3px 5px repeat-y;
  background-size: 3px 5px;
  background-position: center;
  margin: 5px 0;
}

.fx-box {
  width: 110px;
  display: flex;
  align-items: center;
  gap: 24px;
  padding-left: 12px;
}

.fx {
  font-family: "Liberation Serif", serif;
  font-size: 14px;
  color: #555;
}

.fx small { font-size: 10px; }

.formula-input {
  flex: 1;
  margin-left: 3px;
  border-right: none;
}

/* Sheet */
.sheet {
  flex: none;
  table-layout: fixed;
  width: 1061px;
  border-collapse: separate;
  border-spacing: 0;
  background-color: #fff;
  font-family: Lato, "Liberation Sans", sans-serif;
  font-size: 14.7px;
  color: #111;
}

.c-head { width: 52px; }
.c-std { width: 74px; }
.c-wide { width: 121px; }

.sheet th, .sheet td {
  box-sizing: border-box;
  height: 23px;
  padding: 0 4px 0 3px;
  white-space: nowrap;
  overflow: hidden;
  font-weight: 400;
}

.sheet td {
  border-right: 1px solid #d4d4d4;
  border-bottom: 1px solid #d4d4d4;
  letter-spacing: 0.3px;
}

/* numeric columns */
tbody td:nth-child(2),
tbody td:nth-child(5),
tbody td:nth-child(10),
tbody td:nth-child(11),
tbody td:nth-child(12),
tbody td:nth-child(13) {
  text-align: right;
  letter-spacing: 0;
}

/* borough names run up to the cell edge */
tbody td:nth-child(6) {
  padding-right: 0;
  letter-spacing: 0.55px;
}

.letters th {
  background-color: #e6e6e6;
  border-right: 1px solid #bdbdbd;
  border-bottom: 1px solid #a3a3a3;
  color: #333;
  text-align: center;
}

.corner {
  position: relative;
}

.corner-mark {
  position: absolute;
  right: 3px;
  bottom: 2px;
  width: 0;
  height: 0;
  border-left: 15px solid transparent;
  border-bottom: 15px solid #b5b5b5;
}

.rh {
  padding: 0;
  text-align: center;
  background-color: #e6e6e6;
  border-right: 1px solid #a6a6a6;
  border-bottom: 1px solid #a9a9a9;
  box-shadow: inset 0 -2px 0 #f2f2f2;
  color: #1010e8;
}

.sheet .rh {
  padding: 0;
}

.sheet .rh.plain {
  color: #222;
  box-shadow: none;
  border-bottom-color: #c4c4c4;
}

.sheet .rh.active {
  background-color: #d2d2d2;
  border-right: 2px solid #217346;
}

.fields td {
  position: relative;
  height: 23px;
  text-align: left !important;
  letter-spacing: 0.3px !important;
}

.fields .empty {
  position: static;
}

.fields .spill {
  overflow: visible;
}

.fb {
  position: absolute;
  right: 0;
  top: 4px;
  box-sizing: border-box;
  width: 17px;
  height: 17px;
  display: flex;
  align-items: center;
  justify-content: center;
  border: 1px solid #a4a9b0;
  background-color: #f2f2f2;
}

.split td {
  border-bottom-color: #111;
}

.split td:last-child {
  border-bottom-color: #d4d4d4;
}
```
